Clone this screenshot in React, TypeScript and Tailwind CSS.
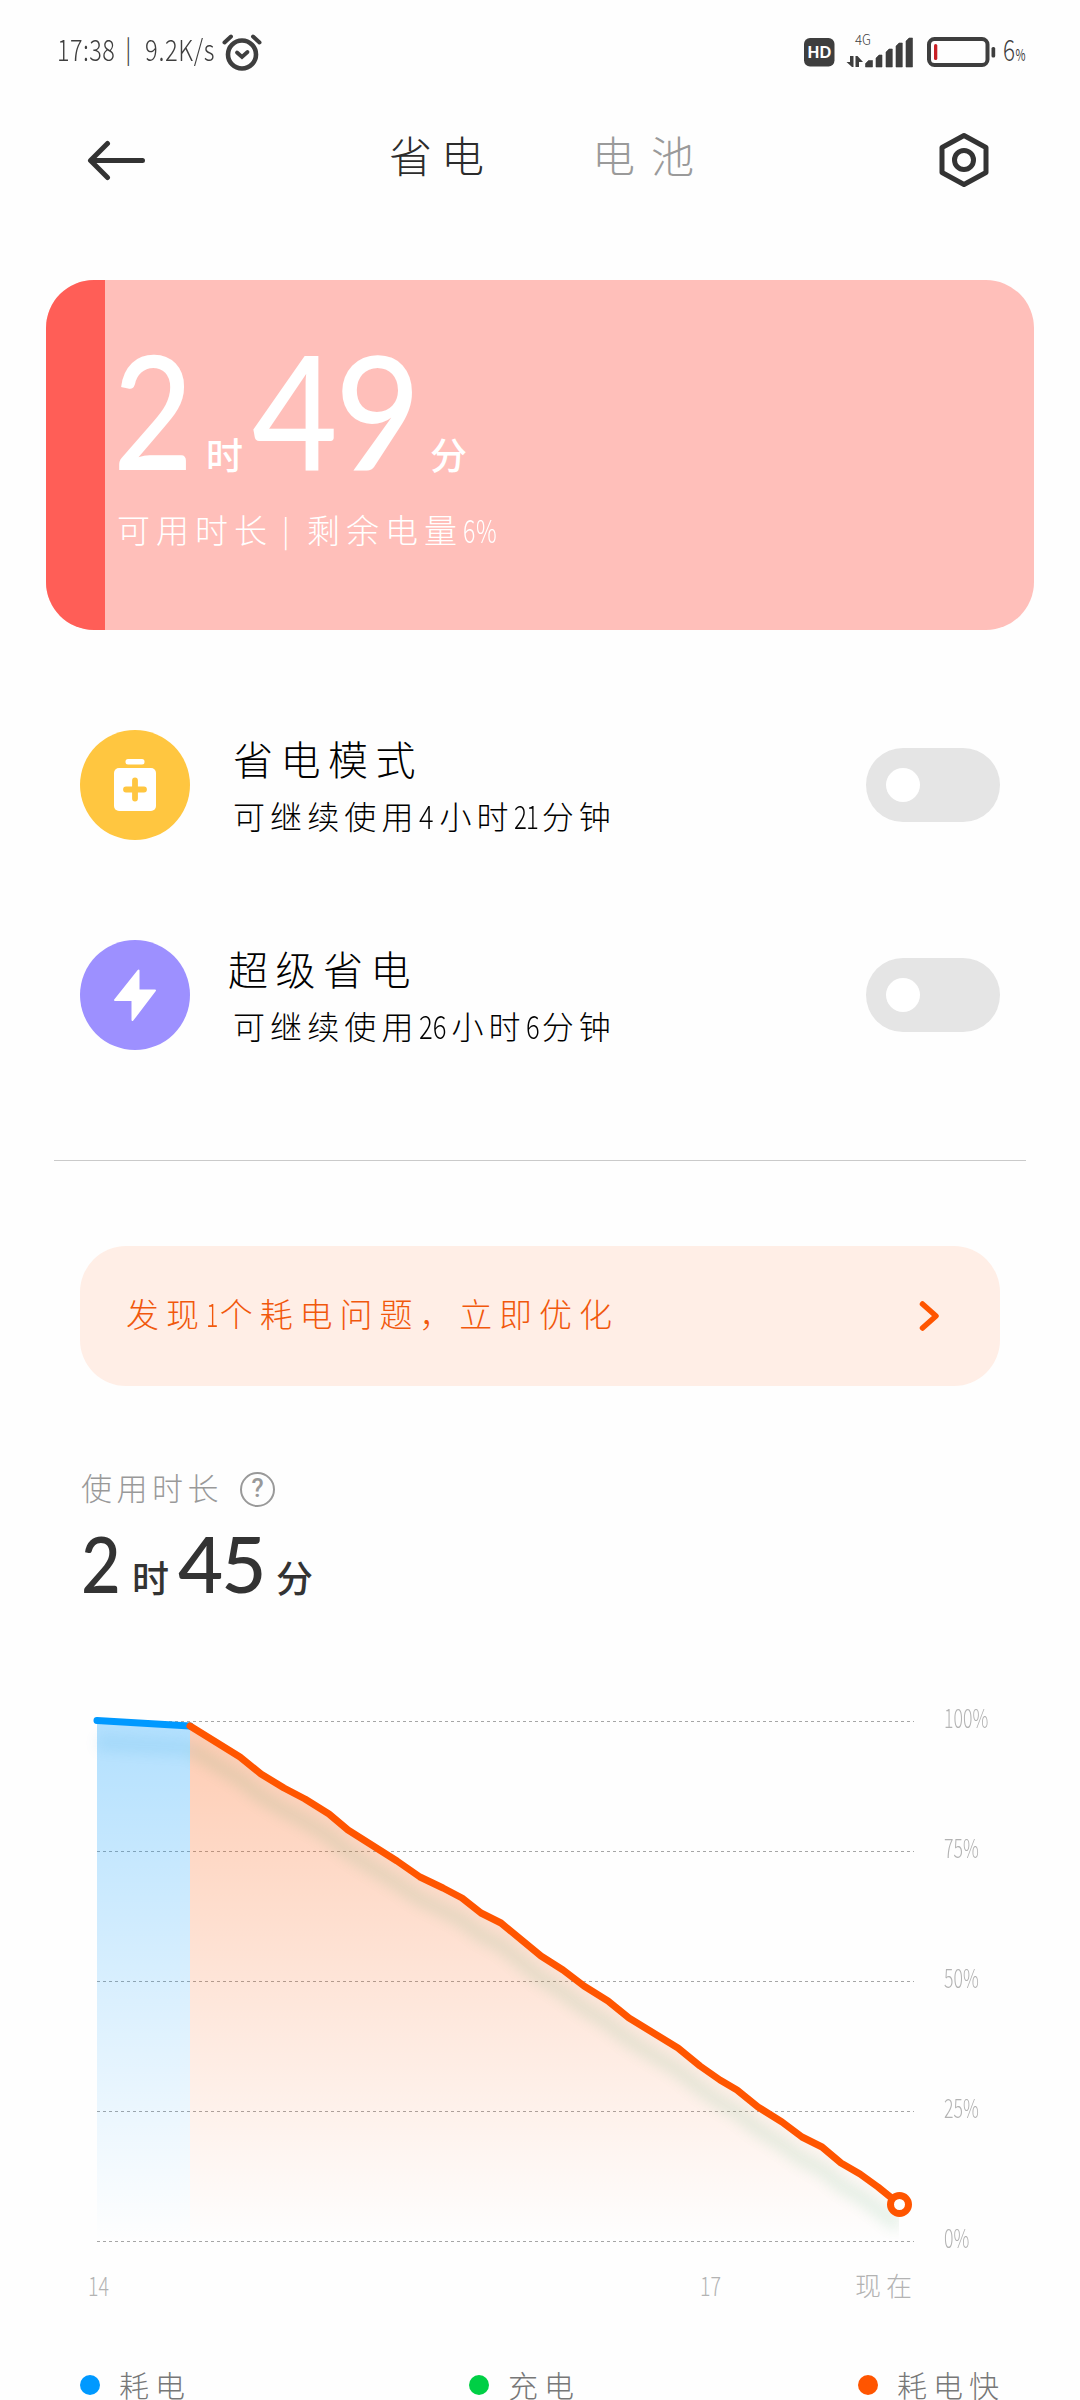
import type { ReactNode } from "react"

const hand = "font-['Noto_Sans_CJK_SC',sans-serif] font-light whitespace-pre"
const digits = "font-['Lato','Noto_Sans_CJK_SC',sans-serif]"

const points: [number, number][] = [
  [190, 1726], [240, 1757], [261, 1774], [284, 1788], [305, 1799], [329, 1814], [348, 1830],
  [397, 1861], [420, 1877], [443, 1888], [462, 1898], [481, 1913], [501, 1923], [541, 1956],
  [563, 1970], [584, 1986], [608, 2001], [629, 2018], [678, 2048], [700, 2066], [720, 2080],
  [737, 2090], [758, 2107], [782, 2122], [802, 2137], [822, 2147], [841, 2163], [860, 2174],
  [878, 2187], [899, 2204],
]
const line = points.map((p) => p.join(",")).join(" ")

const gridLines = [1721.5, 1851.5, 1981.5, 2111.5, 2241.5]

const legend = [
  { name: "耗电", dot: "bg-[#0099ff]" },
  { name: "充电", dot: "bg-[#00cf45]" },
  { name: "耗电快", dot: "bg-[#ff5500]" },
]

function StatusBar() {
  return (
    <div className="flex h-[104px] items-center pl-[57px] pr-[56px] text-[#3e3e3e]">
      <div className={`${hand} flex w-[165px] text-[29px] leading-[30px] -mt-2`}>
        <span className="w-[68px] shrink-0 origin-left scale-x-[0.81] tracking-[0.5px]">17:38</span>
        <span className="w-[20px] shrink-0 text-[26px]">|</span>
        <span className="w-[76px] shrink-0 origin-left scale-x-[0.82] tracking-[0.8px]">9.2K/s</span>
      </div>
      <svg className="h-[38px] w-[40px]" viewBox="0 0 40 38" fill="none" stroke="currentColor" strokeLinecap="round">
        <circle cx="20" cy="21.5" r="14" strokeWidth="4.6" />
        <path d="M2.500 9.500L9 3.500M31 3.500L37.500 9.500" strokeWidth="4" />
        <path d="M15 19.500L20 24L25.500 19" strokeWidth="3.800" />
      </svg>
      <svg className="ml-auto h-[40px] w-[220px] overflow-visible" viewBox="804 32 220 40" fill="#3e3e3e">
        <rect x="804" y="38" width="30.500" height="28.500" rx="6" />
        <text x="819.300" y="58" textAnchor="middle" fontFamily="Lato" fontWeight="900" fontSize="16.500" fill="#fff" textLength="23.500" lengthAdjust="spacingAndGlyphs">HD</text>
        <text x="855" y="45" fontFamily="Noto Sans CJK SC" fontWeight="300" fontSize="14" textLength="16" lengthAdjust="spacingAndGlyphs">4G</text>
        <path d="M850 56h3.500v11H852l-5.500-5h3.500zM855.500 67h3.500v-5h4l-5.500-6h-2z" />
        <path d="M865.500 67v-3.500l3-3h4v6.500zM876 67v-9l3-3h3v12zM886 67V52l3-3h3.300v18zM896 67V46l3-3h3.300v24zM906 67V41l3-3h3.500v29z" stroke="#3e3e3e" strokeWidth="0.6" strokeLinejoin="round" />
        <rect x="929" y="39" width="58.500" height="26" rx="5.500" fill="none" stroke="#3e3e3e" strokeWidth="4" />
        <rect x="934" y="44" width="3.300" height="16" rx="1.600" fill="#c81f25" />
        <rect x="991.500" y="47" width="3.700" height="10.500" rx="1.600" />
        <text x="1003" y="60.500" fontFamily="Noto Sans CJK SC" fontWeight="300" fontSize="30" textLength="12" lengthAdjust="spacingAndGlyphs">6</text>
        <text x="1015.500" y="60.500" fontFamily="Noto Sans CJK SC" fontWeight="400" fontSize="16" textLength="10" lengthAdjust="spacingAndGlyphs">%</text>
      </svg>
    </div>
  )
}

function Header() {
  return (
    <header className="flex h-[112px] items-center px-[86px]">
      <svg className="h-[42px] w-[60px]" viewBox="86 139 60 42" fill="none" stroke="#333" strokeWidth="5" strokeLinecap="round" strokeLinejoin="round">
        <path d="M142.500 160.500H91M107.500 143.500L90.500 160.500L107.500 177.500" />
      </svg>
      <div className={`${hand} ml-[243px] flex text-[43px] leading-[50px] -mt-3`}>
        <span className="w-[203px] tracking-[9px] text-[#2c2c2c]">省电</span>
        <span className="tracking-[16px] text-[#9a9a9a]">电池</span>
      </div>
      <svg className="ml-auto mr-[2px] h-[58px] w-[56px]" viewBox="936 131 56 58" fill="none" stroke="#333" strokeWidth="5" strokeLinejoin="round">
        <path d="M964 135.500L986 147.500V172.500L964 184.500L942 172.500V147.500Z" />
        <circle cx="964" cy="160" r="9.500" />
      </svg>
    </header>
  )
}

function BatteryCard() {
  return (
    <section className="mx-[46px] mt-[64px] flex h-[350px] overflow-hidden rounded-[48px] bg-[#ffbfba]">
      <div className="w-[59px] bg-[#ff5e57]" />
      <div className="pl-[12px] pt-[55px] text-white">
        <div className="flex h-[160px] items-baseline whitespace-pre leading-[148px]">
          <span className={`${digits} -ml-[4px] w-[93px] origin-left scale-x-[0.87] text-[159px] font-medium tracking-[-5px]`}>2</span>
          <span className="w-[44px] font-['Noto_Sans_CJK_SC',sans-serif] text-[37px] leading-[40px] font-medium">时</span>
          <span className={`${digits} ml-[2px] w-[178px] origin-left scale-x-[0.93] text-[159px] font-medium tracking-[-3px]`}>49</span>
          <span className="w-[40px] font-['Noto_Sans_CJK_SC',sans-serif] text-[37px] leading-[40px] font-medium">分</span>
        </div>
        <div className={`${hand} mt-[9px] flex h-[50px] items-center text-[33px] leading-[50px] tracking-[6px]`}>
          <span>可用时长</span>
          <span className="w-[34px] pl-[9px] text-[30px]">|</span>
          <span>剩余电量</span>
          <span className="origin-left scale-x-[0.72] text-[32px] tracking-[1px]">6%</span>
        </div>
      </div>
    </section>
  )
}

function ModeRow({ color, icon, title, children }: { color: string; icon: ReactNode; title: ReactNode; children: ReactNode }) {
  return (
    <div className="flex h-[110px] items-center px-20">
      <div className={`${color} flex size-[110px] items-center justify-center rounded-full`}>{icon}</div>
      <div className={`${hand} ml-[43px] text-black`}>
        <div className="-mt-[2px] h-[61px] text-[40px] leading-[58px] tracking-[7.500px]">{title}</div>
        <div className="flex h-[50px] text-[32px] leading-[50px] tracking-[5.100px]">{children}</div>
      </div>
      <div className="ml-auto flex h-[74px] w-[134px] items-center rounded-full bg-[#e5e5e5] pl-5">
        <div className="size-[34px] rounded-full bg-white" />
      </div>
    </div>
  )
}

function UsageChart() {
  return (
    <div className={`${hand} mt-[94px] flex h-[620px] text-[#b3b3b3]`}>
      <svg className="h-[620px] w-[940px] shrink-0" viewBox="0 1700 940 620" fill="none">
        <defs>
          <linearGradient id="blue" x1="0" y1="1721" x2="0" y2="2241" gradientUnits="userSpaceOnUse">
            <stop offset="0" stopColor="#0099ff" stopOpacity="0.3" />
            <stop offset="1" stopColor="#0099ff" stopOpacity="0" />
          </linearGradient>
          <linearGradient id="orange" x1="0" y1="1721" x2="0" y2="2241" gradientUnits="userSpaceOnUse">
            <stop offset="0" stopColor="#ff5500" stopOpacity="0.3" />
            <stop offset="1" stopColor="#ff5500" stopOpacity="0" />
          </linearGradient>
          <filter id="soft" x="60" y="1680" width="880" height="600" filterUnits="userSpaceOnUse">
            <feGaussianBlur stdDeviation="7" />
          </filter>
          <clipPath id="plot">
            <rect x="80" y="1700" width="819" height="541" />
          </clipPath>
        </defs>
        {gridLines.map((y) => (
          <path key={y} d={`M97 ${y}H914`} stroke="#a6a6a6" strokeDasharray="3 3" />
        ))}
        <path d="M97 1721L190 1726V2241H97Z" fill="url(#blue)" />
        <path d={`M190 2241L${line} V2241Z`} fill="url(#orange)" />
        <g clipPath="url(#plot)">
          <g filter="url(#soft)" transform="translate(0 22)" strokeWidth="14" opacity="0.1">
            <path d="M97 1720.500L190 1726" stroke="#0088cc" />
            <polyline points={line} stroke="#008f40" />
          </g>
        </g>
        <path d="M97 1720.500L190 1726" stroke="#0099ff" strokeWidth="7" strokeLinecap="round" />
        <polyline points={line} stroke="#ff5500" strokeWidth="7" strokeLinecap="round" strokeLinejoin="round" />
        <circle cx="899.500" cy="2204.500" r="9" fill="#fff" stroke="#ff5500" strokeWidth="7" />
        <g fill="#b3b3b3" fontSize="26">
          <text x="88" y="2296" textLength="21" lengthAdjust="spacingAndGlyphs">14</text>
          <text x="700" y="2296" textLength="21" lengthAdjust="spacingAndGlyphs">17</text>
          <text x="855" y="2296" textLength="57">现在</text>
        </g>
      </svg>
      <div className="flex flex-col pt-[2px] text-[26px] leading-[30px]">
        {["100%", "75%", "50%", "25%", "0%"].map((label) => (
          <div key={label} className="h-[130px] shrink-0 origin-left scale-x-[0.68] pl-[6px]">{label}</div>
        ))}
      </div>
    </div>
  )
}

export default function App() {
  return (
    <div className="h-[2400px] w-[1080px] overflow-hidden bg-[#fefefe]">
      <StatusBar />
      <Header />
      <BatteryCard />

      <div className="mt-[100px] flex flex-col gap-[100px]">
        <ModeRow
          color="bg-[#ffc640]"
          title="省电模式"
          icon={
            <svg className="h-[52px] w-[42px]" viewBox="0 0 42 52" fill="#fff">
              <rect x="11.500" width="19" height="5.500" rx="2.500" />
              <rect y="9" width="42" height="43" rx="5" />
              <path d="M21 21.500V39.500M12 30.500H30" stroke="#ffc640" strokeWidth="5.800" strokeLinecap="round" />
            </svg>
          }
        >
          <span>可继续使用</span>
          <span className="w-[21px] origin-left scale-x-[0.85]">4</span>
          <span>小时</span>
          <span className="w-[28px] origin-left scale-x-[0.75] tracking-[-1px]">21</span>
          <span>分钟</span>
        </ModeRow>
        <ModeRow
          color="bg-[#9d90ff]"
          title={<span className="-ml-[5px]">超级省电</span>}
          icon={
            <svg className="h-[52px] w-[42px]" viewBox="0 0 42 52" fill="#fff" stroke="#fff" strokeWidth="2" strokeLinejoin="round">
              <path d="M24.500 1.500V21.500H41L18.500 51V31H1Z" />
            </svg>
          }
        >
          <span>可继续使用</span>
          <span className="w-[33px] origin-left scale-x-[0.8] tracking-[0px]">26</span>
          <span>小时</span>
          <span className="w-[16px] origin-left scale-x-[0.8]">6</span>
          <span>分钟</span>
        </ModeRow>
      </div>

      <div className="mx-[54px] mt-[110px] h-px bg-[#cacaca]" />

      <div className={`${hand} mx-20 mt-[85px] flex h-[140px] items-center rounded-[46px] bg-[#ffeee6] pl-[46px] text-[33px] tracking-[6.900px] text-[#f1580c]`}>
        <span className="-mt-[5px]">发现</span>
        <span className="-mt-[5px] w-[14px] origin-left scale-x-[0.7]">1</span>
        <span className="-mt-[5px]">个耗电问题，立即优化</span>
        <svg className="mr-[58px] ml-auto h-[34px] w-[24px]" viewBox="0 0 24 34" fill="none" stroke="#ff5500" strokeWidth="5.500" strokeLinecap="round" strokeLinejoin="round">
          <path d="M4.500 5L18 17L4.500 29" />
        </svg>
      </div>

      <div className="mt-[78px] flex h-[50px] items-center pl-[81px] text-[#999]">
        <div className={`${hand} -mt-[3px] w-[159px] text-[31px] tracking-[4.500px]`}>使用时长</div>
        <div className="flex size-[35px] items-center justify-center rounded-full border-[2.500px] border-[#999] font-['Roboto',sans-serif] text-[25px] font-medium">?</div>
      </div>

      <div className="mt-[6px] flex h-[86px] items-baseline pl-[81px] leading-[86px] text-[#333]">
        <span className={`${digits} w-[51px] origin-left scale-x-[0.88] text-[78px] font-medium tracking-[-2px]`}>2</span>
        <span className="w-[46px] font-['Noto_Sans_CJK_SC',sans-serif] text-[37px] font-medium">时</span>
        <span className={`${digits} w-[98px] text-[78px] font-medium tracking-[-2px]`}>45</span>
        <span className="font-['Noto_Sans_CJK_SC',sans-serif] text-[37px] font-medium">分</span>
      </div>

      <UsageChart />

      <div className={`${hand} mt-[51px] flex h-[28px] justify-between pr-[75px] pl-20 text-[30px] leading-[28px] tracking-[6px] text-[#777]`}>
        {legend.map((item) => (
          <div key={item.name} className="flex items-center">
            <div className={`${item.dot} mr-[19px] size-5 rounded-full`} />
            <span className="-mt-[2px]">{item.name}</span>
          </div>
        ))}
      </div>
    </div>
  )
}
